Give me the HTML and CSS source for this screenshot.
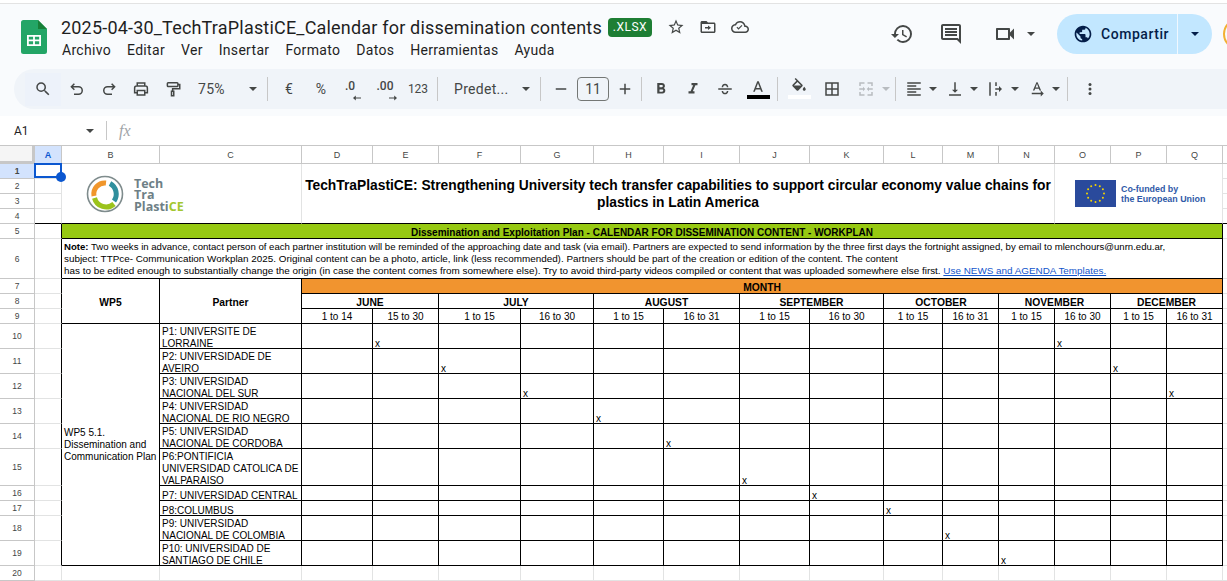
FILE: index.html
```html
<!DOCTYPE html>
<html lang="es">
<head>
    <meta charset="UTF-8">
    <title>2025-04-30_TechTraPlastiCE_Calendar for dissemination contents</title>
    <link rel="stylesheet" href="styles.css">
</head>
<body>
<div class="app">
    <header class="topbar">
        <svg class="sheets-logo" viewBox="0 0 26 34"><path fill="#23a566" d="M2.5 0H17l9 9v22.500a2.500 2.500 0 0 1-2.500 2.500h-21A2.500 2.500 0 0 1 0 31.500v-29A2.500 2.500 0 0 1 2.500 0z"/><path fill="#188038" d="M17 0l9 9h-9z"/><path fill="#fff" d="M6 15h14v11H6zm1.800 1.800v2.800h4.300v-2.800zm6.100 0v2.800h4.300v-2.800zm-6.100 4.500v2.900h4.300v-2.900zm6.100 0v2.900h4.300v-2.900z" fill-rule="evenodd"/></svg>
        <div class="doc">
            <div class="doc-title">
                <h1>2025-04-30_TechTraPlastiCE_Calendar for dissemination contents</h1>
                <span class="badge">.XLSX</span>
                <svg class="ic star" viewBox="0 0 24 24"><path d="M22 9.240l-7.190-.620L12 2 9.190 8.630 2 9.240l5.460 4.730L5.820 21 12 17.270 18.180 21l-1.630-7.030L22 9.240zM12 15.400l-3.760 2.270 1-4.280-3.320-2.880 4.380-.380L12 6.100l1.710 4.040 4.380.380-3.320 2.880 1 4.280L12 15.400z"/></svg>
                <svg class="ic folder" viewBox="0 0 24 24"><path d="M20 6h-8l-2-2H4c-1.100 0-2 .900-2 2v12c0 1.100.900 2 2 2h16c1.100 0 2-.900 2-2V8c0-1.100-.900-2-2-2zm0 12H4V8h16v10zm-8-2v-2H8v-2h4v-2l4 3z"/></svg>
                <svg class="ic cloud" viewBox="0 0 24 24"><path d="M19.350 10.040C18.670 6.590 15.640 4 12 4 9.110 4 6.600 5.640 5.350 8.040 2.340 8.360 0 10.910 0 14c0 3.310 2.690 6 6 6h13c2.760 0 5-2.240 5-5 0-2.640-2.050-4.780-4.650-4.960zM19 18H6c-2.210 0-4-1.790-4-4 0-2.050 1.530-3.760 3.560-3.970l1.070-.110.500-.950C8.080 7.140 9.940 6 12 6c2.620 0 4.880 1.860 5.390 4.430l.300 1.500 1.530.110c1.560.100 2.780 1.410 2.780 2.960 0 1.650-1.350 3-3 3zm-9-2.500l-2.700-2.700 1.100-1.100 1.600 1.600 4.100-4.100 1.100 1.100z"/></svg>
            </div>
            <nav class="menu">
                <span>Archivo</span><span>Editar</span><span>Ver</span><span>Insertar</span><span>Formato</span><span>Datos</span><span>Herramientas</span><span>Ayuda</span>
            </nav>
        </div>
        <div class="actions">
            <svg class="ic-lg history" viewBox="0 0 24 24"><path d="M13 3a9 9 0 0 0-9 9H1l3.890 3.890.070.140L9 12H6c0-3.870 3.130-7 7-7s7 3.130 7 7-3.130 7-7 7c-1.930 0-3.680-.790-4.940-2.060l-1.420 1.420A8.954 8.954 0 0 0 13 21a9 9 0 0 0 0-18zm-1 5v5l4.280 2.540.720-1.210-3.500-2.080V8H12z"/></svg>
            <svg class="ic-lg comment" viewBox="0 0 24 24"><path d="M21.990 4c0-1.100-.890-2-1.990-2H4c-1.100 0-2 .900-2 2v12c0 1.100.900 2 2 2h14l4 4-.010-18zM20 4v13.170L18.830 16H4V4h16zM6 12h12v2H6zm0-3h12v2H6zm0-3h12v2H6z"/></svg>
            <svg class="ic-lg video" viewBox="0 0 24 24"><path d="M15 8v8H5V8h10m1-2H4c-.550 0-1 .450-1 1v10c0 .550.450 1 1 1h12c.550 0 1-.450 1-1v-3.500l4 4v-11l-4 4V7c0-.550-.450-1-1-1z"/></svg>
            <i class="caret video-caret"></i>
        </div>
        <div class="share">
            <div class="share-main">
                <svg class="globe" viewBox="0 0 24 24"><path d="M12 2C6.480 2 2 6.480 2 12s4.480 10 10 10 10-4.480 10-10S17.520 2 12 2zm-1 17.930c-3.950-.490-7-3.850-7-7.930 0-.620.080-1.210.210-1.790L9 15v1c0 1.100.900 2 2 2v1.930zm6.900-2.540c-.260-.810-1-1.390-1.900-1.390h-1v-3c0-.550-.450-1-1-1H8v-2h2c.550 0 1-.450 1-1V7h2c1.100 0 2-.900 2-2v-.410c2.930 1.190 5 4.060 5 7.410 0 2.080-.800 3.970-2.100 5.390z"/></svg>
                <span>Compartir</span>
            </div>
            <div class="share-more"><i class="caret dark"></i></div>
        </div>
        <div class="avatar"></div>
    </header>

    <div class="toolbar-wrap">
    <div class="toolbar">
        <div class="tool search"><svg class="ic" viewBox="0 0 24 24"><path d="M15.500 14h-.790l-.280-.270A6.471 6.471 0 0 0 16 9.500 6.500 6.500 0 1 0 9.500 16c1.610 0 3.090-.590 4.230-1.570l.270.280v.790l5 4.990L20.490 19l-4.990-5zm-6 0C7.010 14 5 11.990 5 9.500S7.010 5 9.500 5 14 7.010 14 9.500 11.990 14 9.500 14z"/></svg></div>
        <div class="tool"><svg class="ic line" viewBox="0 0 24 24"><path d="M8.500 5L4.500 9l4 4M4.500 9H14a4.800 4.800 0 0 1 0 10H8"/></svg></div>
        <div class="tool"><svg class="ic line" viewBox="0 0 24 24"><path d="M15.500 5l4 4-4 4M19.500 9H10a4.800 4.800 0 0 0 0 10h6"/></svg></div>
        <div class="tool"><svg class="ic line" viewBox="0 0 24 24"><path d="M7 8V4h10v4M7 17H3.500v-6.500A2.500 2.500 0 0 1 6 8h12a2.500 2.500 0 0 1 2.500 2.500V17H17M7 14h10v6H7z"/></svg></div>
        <div class="tool"><svg class="ic line" viewBox="0 0 24 24"><path d="M5.500 3.500h12a1 1 0 0 1 1 1v3a1 1 0 0 1-1 1h-12a1 1 0 0 1-1-1v-3a1 1 0 0 1 1-1zM18.500 6H21v5.500h-9.500V15M10 15h3v6h-3z"/></svg></div>
        <div class="select zoom-select"><span>75%</span><i class="caret"></i></div>
        <i class="sep"></i>
        <div class="tool txt euro">€</div>
        <div class="tool txt">%</div>
        <div class="tool dec dec-less"><span>.0</span><svg viewBox="0 0 10 6"><path d="M10 2.400H3.500V0L0 3l3.500 3V3.600H10z"/></svg></div>
        <div class="tool dec dec-more"><span>.00</span><svg viewBox="0 0 10 6"><path d="M0 2.400h6.500V0L10 3 6.500 6V3.600H0z"/></svg></div>
        <div class="tool txt num">123</div>
        <i class="sep"></i>
        <div class="select font-select"><span>Predet...</span><i class="caret"></i></div>
        <i class="sep"></i>
        <div class="tool small"><svg class="ic" viewBox="0 0 24 24"><path d="M5 11h14v2H5z"/></svg></div>
        <div class="size-box">11</div>
        <div class="tool small"><svg class="ic" viewBox="0 0 24 24"><path d="M19 13h-6v6h-2v-6H5v-2h6V5h2v6h6z"/></svg></div>
        <i class="sep plus-sep"></i>
        <div class="tool"><svg class="ic" viewBox="0 0 24 24"><path d="M15.600 10.790c.970-.670 1.650-1.770 1.650-2.790 0-2.260-1.750-4-4-4H7v14h7.040c2.090 0 3.710-1.700 3.710-3.790 0-1.520-.860-2.820-2.150-3.420zM10 6.500h3c.830 0 1.500.670 1.500 1.500s-.670 1.500-1.500 1.500h-3v-3zm3.500 9H10v-3h3.500c.830 0 1.500.670 1.500 1.500s-.670 1.500-1.500 1.500z"/></svg></div>
        <div class="tool"><svg class="ic" viewBox="0 0 24 24"><path d="M10 4v3h2.210l-3.420 8H6v3h8v-3h-2.210l3.420-8H18V4z"/></svg></div>
        <div class="tool"><svg class="ic" viewBox="0 0 24 24"><path d="M3 11h18v2H3zM7.500 9.500C7.800 6.500 9.800 5 12 5s4.200 1.500 4.500 4.500h-2C14.200 8 13.300 7 12 7s-2.200 1-2.500 2.500zM7.500 14.500h2C9.800 16.200 10.700 17 12 17s2.200-.800 2.500-2.500h2C16.200 17.500 14.200 19 12 19s-4.200-1.500-4.500-4.500z"/></svg></div>
        <div class="tool color"><svg class="ic" viewBox="0 0 24 24"><path d="M11 3L5.500 17h2.250l1.120-3h6.250l1.120 3h2.250L13 3h-2zm-1.380 9L12 5.670 14.380 12H9.620z"/></svg><b class="bar black"></b></div>
        <i class="sep color-sep"></i>
        <div class="tool color fill"><svg class="ic" viewBox="0 0 24 24"><path d="M16.560 8.940L7.620 0 6.210 1.410l2.380 2.380-5.150 5.150c-.590.590-.590 1.540 0 2.120l5.500 5.500c.290.290.680.440 1.060.440s.770-.150 1.060-.440l5.500-5.500c.590-.580.590-1.530 0-2.120zM5.210 10L10 5.210 14.790 10H5.210zM19 11.500s-2 2.170-2 3.500c0 1.100.900 2 2 2s2-.900 2-2c0-1.330-2-3.500-2-3.500z"/></svg><b class="bar white"></b></div>
        <div class="tool borders"><svg class="ic" viewBox="0 0 24 24"><path d="M3 3v18h18V3H3zm8 16H5v-6h6v6zm0-8H5V5h6v6zm8 8h-6v-6h6v6zm0-8h-6V5h6v6z"/></svg></div>
        <div class="tool merge"><svg class="ic off" viewBox="0 0 24 24"><path d="M3 3h7v2H5v3H3zM14 3h7v5h-2V5h-5zM3 16h2v3h5v2H3zM19 16h2v5h-7v-2h5zM3 11h5V9l3 3-3 3v-2H3zM21 11h-5V9l-3 3 3 3v-2h5z"/></svg></div>
        <i class="caret off merge-caret"></i>
        <i class="sep merge-sep"></i>
        <div class="tool drop"><svg class="ic" viewBox="0 0 24 24"><path d="M3 3h18v2H3zM3 7h12v2H3zM3 11h18v2H3zM3 15h12v2H3zM3 19h18v2H3z"/></svg><i class="caret"></i></div>
        <div class="tool drop"><svg class="ic" viewBox="0 0 24 24"><path d="M16 13h-3V3h-2v10H8l4 4 4-4zM4 19v2h16v-2H4z"/></svg><i class="caret"></i></div>
        <div class="tool drop"><svg class="ic" viewBox="0 0 24 24"><path d="M3 3h2v18H3zM11 3h2v5h-2zM11 16h2v5h-2zM11 11h5V8l4 4-4 4v-3h-5z"/></svg><i class="caret"></i></div>
        <div class="tool drop"><svg class="ic" viewBox="0 0 24 24"><path d="M12.750 3h-1.500L6.500 14h2.100l.900-2.200h5l.900 2.200h2.100L12.750 3zm-2.620 7L12 4.980 13.870 10h-3.740zM17 17H5v2h12v3l4-4-4-4v3z"/></svg><i class="caret"></i></div>
        <i class="sep rotate-sep"></i>
        <div class="tool more"><svg class="ic" viewBox="0 0 24 24"><circle cx="12" cy="6" r="2"/><circle cx="12" cy="12" r="2"/><circle cx="12" cy="18" r="2"/></svg></div>
    </div>
    </div>

    <div class="formula">
        <div class="name-box"><span>A1</span><i class="caret"></i></div>
        <i class="formula-sep"></i>
        <span class="fx">fx</span>
    </div>

    <div class="sheet">
        <table class="grid">
            <colgroup>
                <col class="c-head"><col class="c-a"><col class="c-b"><col class="c-c">
                <col class="c-d"><col class="c-e"><col class="c-f"><col class="c-g"><col class="c-h"><col class="c-i"><col class="c-j"><col class="c-k"><col class="c-l">
                <col class="c-s"><col class="c-s"><col class="c-s"><col class="c-s"><col class="c-s"><col class="c-r">
            </colgroup>
            <tr class="r-head">
                <th class="corner"></th><th class="picked">A</th><th>B</th><th>C</th><th>D</th><th>E</th><th>F</th><th>G</th><th>H</th><th>I</th><th>J</th><th>K</th><th>L</th><th>M</th><th>N</th><th>O</th><th>P</th><th>Q</th><th></th>
            </tr>
            <tr class="r15">
                <td class="num picked">1</td>
                <td class="cell-a1"><div class="selection"><b></b></div></td>
                <td colspan="2" rowspan="4" class="to-black">
                    <div class="tech-logo">
                        <svg viewBox="0 0 40 40"><circle cx="20" cy="20" r="17.500" fill="none" stroke="#7f8c8d" stroke-width="1.600"/><g fill="none" stroke-width="5"><path stroke="#f0962c" d="M9 22A11 11 0 0 1 21 9"/><path stroke="#2f8f9d" d="M25 9.500A12 12 0 0 1 29 27"/><path stroke="#9bc31c" d="M9.500 24A12 12 0 0 0 29 30"/></g></svg>
                        <div class="tech-name">Tech<br>Tra<br>Plasti<span>CE</span></div>
                    </div>
                </td>
                <td colspan="11" rowspan="4" class="main-title to-black">TechTraPlastiCE: Strengthening University tech transfer capabilities to support circular economy value chains for plastics in Latin America</td>
                <td colspan="3" rowspan="4" class="to-black">
                    <div class="eu-logo">
                        <svg viewBox="0 0 41 27"><rect width="41" height="27" fill="#2a4a9c"/><g fill="#f5d400"><circle cx="20.500" cy="5" r="1"/><circle cx="24.800" cy="6.200" r="1"/><circle cx="27.900" cy="9.200" r="1"/><circle cx="29" cy="13.500" r="1"/><circle cx="27.900" cy="17.800" r="1"/><circle cx="24.800" cy="20.800" r="1"/><circle cx="20.500" cy="22" r="1"/><circle cx="16.200" cy="20.800" r="1"/><circle cx="13.100" cy="17.800" r="1"/><circle cx="12" cy="13.500" r="1"/><circle cx="13.100" cy="9.200" r="1"/><circle cx="16.200" cy="6.200" r="1"/></g></svg>
                        <div class="eu-text">Co-funded by<br>the European Union</div>
                    </div>
                </td>
                <td></td>
            </tr>
            <tr class="r15"><td class="num">2</td><td></td><td></td></tr>
            <tr class="r15"><td class="num">3</td><td></td><td></td></tr>
            <tr class="r15"><td class="num">4</td><td class="to-black"></td><td class="to-black"></td></tr>
            <tr class="r15">
                <td class="num">5</td><td class="edge"></td>
                <td colspan="16" class="k green">Dissemination and Exploitation Plan - CALENDAR FOR DISSEMINATION CONTENT - WORKPLAN</td>
                <td></td>
            </tr>
            <tr class="r40">
                <td class="num">6</td><td class="edge"></td>
                <td colspan="16" class="k note"><strong>Note:</strong> Two weeks in advance, contact person of each partner institution will be reminded of the approaching date and task (via email). Partners are expected to send information by the three first days the fortnight assigned, by email to mlenchours@unrn.edu.ar,<br><span class="note-wide">subject: TTPce- Communication Workplan 2025. Original content can be a photo, article, link (less recommended). Partners should be part of the creation or edition of the content. The content<br>has to be edited enough to substantially change the origin (in case the content comes from somewhere else). Try to avoid third-party videos compiled or content that was uploaded somewhere else first. <a href="#">Use NEWS and AGENDA Templates.</a></span></td>
                <td></td>
            </tr>
            <tr class="r15">
                <td class="num">7</td><td class="edge"></td>
                <td rowspan="3" class="k head">WP5</td>
                <td rowspan="3" class="k head">Partner</td>
                <td colspan="14" class="k head orange">MONTH</td>
                <td></td>
            </tr>
            <tr class="r15">
                <td class="num">8</td><td class="edge"></td>
                <td colspan="2" class="k head">JUNE</td><td colspan="2" class="k head">JULY</td><td colspan="2" class="k head">AUGUST</td><td colspan="2" class="k head">SEPTEMBER</td><td colspan="2" class="k head">OCTOBER</td><td colspan="2" class="k head">NOVEMBER</td><td colspan="2" class="k head">DECEMBER</td>
                <td></td>
            </tr>
            <tr class="r15 ranges">
                <td class="num">9</td><td class="edge"></td>
                <td class="k">1 to 14</td><td class="k">15 to 30</td><td class="k">1 to 15</td><td class="k">16 to 30</td><td class="k">1 to 15</td><td class="k">16 to 31</td><td class="k">1 to 15</td><td class="k">16 to 30</td><td class="k">1 to 15</td><td class="k">16 to 31</td><td class="k">1 to 15</td><td class="k">16 to 30</td><td class="k">1 to 15</td><td class="k">16 to 31</td>
                <td></td>
            </tr>
            <tr class="r25 plan">
                <td class="num">10</td><td class="edge"></td>
                <td rowspan="10" class="k wp">WP5 5.1.<br>Dissemination and<br>Communication Plan</td>
                <td class="k"><div class="t">P1: UNIVERSITE DE<br>LORRAINE</div></td>
                <td class="k"></td><td class="k"><div class="t">x</div></td><td class="k"></td><td class="k"></td><td class="k"></td><td class="k"></td><td class="k"></td><td class="k"></td><td class="k"></td><td class="k"></td><td class="k"></td><td class="k"><div class="t">x</div></td><td class="k"></td><td class="k"></td>
                <td></td>
            </tr>
            <tr class="r25 plan">
                <td class="num">11</td><td class="edge"></td>
                <td class="k"><div class="t">P2: UNIVERSIDADE DE<br>AVEIRO</div></td>
                <td class="k"></td><td class="k"></td><td class="k"><div class="t">x</div></td><td class="k"></td><td class="k"></td><td class="k"></td><td class="k"></td><td class="k"></td><td class="k"></td><td class="k"></td><td class="k"></td><td class="k"></td><td class="k"><div class="t">x</div></td><td class="k"></td>
                <td></td>
            </tr>
            <tr class="r25 plan">
                <td class="num">12</td><td class="edge"></td>
                <td class="k"><div class="t">P3: UNIVERSIDAD<br>NACIONAL DEL SUR</div></td>
                <td class="k"></td><td class="k"></td><td class="k"></td><td class="k"><div class="t">x</div></td><td class="k"></td><td class="k"></td><td class="k"></td><td class="k"></td><td class="k"></td><td class="k"></td><td class="k"></td><td class="k"></td><td class="k"></td><td class="k"><div class="t">x</div></td>
                <td></td>
            </tr>
            <tr class="r25 plan">
                <td class="num">13</td><td class="edge"></td>
                <td class="k"><div class="t">P4: UNIVERSIDAD<br>NACIONAL DE RIO NEGRO</div></td>
                <td class="k"></td><td class="k"></td><td class="k"></td><td class="k"></td><td class="k"><div class="t">x</div></td><td class="k"></td><td class="k"></td><td class="k"></td><td class="k"></td><td class="k"></td><td class="k"></td><td class="k"></td><td class="k"></td><td class="k"></td>
                <td></td>
            </tr>
            <tr class="r25 plan">
                <td class="num">14</td><td class="edge"></td>
                <td class="k"><div class="t">P5: UNIVERSIDAD<br>NACIONAL DE CORDOBA</div></td>
                <td class="k"></td><td class="k"></td><td class="k"></td><td class="k"></td><td class="k"></td><td class="k"><div class="t">x</div></td><td class="k"></td><td class="k"></td><td class="k"></td><td class="k"></td><td class="k"></td><td class="k"></td><td class="k"></td><td class="k"></td>
                <td></td>
            </tr>
            <tr class="r37 plan">
                <td class="num">15</td><td class="edge"></td>
                <td class="k"><div class="t">P6:PONTIFICIA<br>UNIVERSIDAD CATOLICA DE<br>VALPARAISO</div></td>
                <td class="k"></td><td class="k"></td><td class="k"></td><td class="k"></td><td class="k"></td><td class="k"></td><td class="k"><div class="t">x</div></td><td class="k"></td><td class="k"></td><td class="k"></td><td class="k"></td><td class="k"></td><td class="k"></td><td class="k"></td>
                <td></td>
            </tr>
            <tr class="r15 plan">
                <td class="num">16</td><td class="edge"></td>
                <td class="k"><div class="t">P7: UNIVERSIDAD CENTRAL</div></td>
                <td class="k"></td><td class="k"></td><td class="k"></td><td class="k"></td><td class="k"></td><td class="k"></td><td class="k"></td><td class="k"><div class="t">x</div></td><td class="k"></td><td class="k"></td><td class="k"></td><td class="k"></td><td class="k"></td><td class="k"></td>
                <td></td>
            </tr>
            <tr class="r15 plan">
                <td class="num">17</td><td class="edge"></td>
                <td class="k"><div class="t">P8:COLUMBUS</div></td>
                <td class="k"></td><td class="k"></td><td class="k"></td><td class="k"></td><td class="k"></td><td class="k"></td><td class="k"></td><td class="k"></td><td class="k"><div class="t">x</div></td><td class="k"></td><td class="k"></td><td class="k"></td><td class="k"></td><td class="k"></td>
                <td></td>
            </tr>
            <tr class="r25 plan">
                <td class="num">18</td><td class="edge"></td>
                <td class="k"><div class="t">P9: UNIVERSIDAD<br>NACIONAL DE COLOMBIA</div></td>
                <td class="k"></td><td class="k"></td><td class="k"></td><td class="k"></td><td class="k"></td><td class="k"></td><td class="k"></td><td class="k"></td><td class="k"></td><td class="k"><div class="t">x</div></td><td class="k"></td><td class="k"></td><td class="k"></td><td class="k"></td>
                <td></td>
            </tr>
            <tr class="r25 plan">
                <td class="num">19</td><td class="edge"></td>
                <td class="k"><div class="t">P10: UNIVERSIDAD DE<br>SANTIAGO DE CHILE</div></td>
                <td class="k"></td><td class="k"></td><td class="k"></td><td class="k"></td><td class="k"></td><td class="k"></td><td class="k"></td><td class="k"></td><td class="k"></td><td class="k"></td><td class="k"><div class="t">x</div></td><td class="k"></td><td class="k"></td><td class="k"></td>
                <td></td>
            </tr>
            <tr class="r15">
                <td class="num">20</td><td></td><td></td><td></td><td></td><td></td><td></td><td></td><td></td><td></td><td></td><td></td><td></td><td></td><td></td><td></td><td></td><td></td><td></td>
            </tr>
        </table>
    </div>
</div>
</body>
</html>
```

FILE: styles.css
```css
* {
    box-sizing: border-box;
}
html, body {
    margin: 0;
    height: 100%;
    overflow: hidden;
    background: white;
}
.app {
    width: 1227px;
    height: 581px;
    display: flex;
    flex-direction: column;
    overflow: hidden;
    font-family: Roboto, "Open Sans", sans-serif;
    color: #1f1f1f;
}

/* top bar */
.topbar {
    height: 66px;
    margin-top: 3px;
    padding-left: 21px;
    display: flex;
    align-items: flex-start;
    background: #f9fbfd;
    border-top: 1px solid #e3e3e3;
    flex: none;
}
.sheets-logo {
    width: 26px;
    height: 34px;
    margin-top: 16px;
    flex: none;
}
.doc {
    margin-left: 14px;
    width: 720px;
    flex: none;
}
.doc-title {
    display: flex;
    align-items: center;
    height: 24px;
    margin-top: 11px;
}
.doc-title h1 {
    margin: 0;
    font-size: 18px;
    font-weight: 400;
    letter-spacing: 0.19px;
    white-space: nowrap;
    color: #1f1f1f;
    width: 547px;
}
.badge {
    width: 44px;
    height: 19px;
    background: #1e7e34;
    color: white;
    font-size: 12px;
    line-height: 19px;
    letter-spacing: 0.5px;
    text-align: center;
    border-radius: 4px;
    flex: none;
}
.ic {
    width: 18px;
    height: 18px;
    fill: #444746;
    flex: none;
}
.ic.line {
    fill: none;
    stroke: #444746;
    stroke-width: 2;
}
.ic.off {
    fill: #b8bcc0;
}
.star {
    margin-left: 15px;
}
.folder, .cloud {
    margin-left: 14px;
}
.menu {
    display: flex;
    gap: 16px;
    margin-top: 1px;
    margin-left: 1px;
    font-size: 14px;
    line-height: 20px;
    letter-spacing: 0.31px;
    color: #1f1f1f;
}
.actions {
    display: flex;
    align-items: center;
    margin-top: 14px;
    height: 32px;
    margin-left: 109px;
    flex: none;
}
.ic-lg {
    width: 24px;
    height: 24px;
    fill: #444746;
    flex: none;
}
.comment {
    margin-left: 25px;
}
.video {
    margin-left: 30px;
}
.video-caret {
    margin-left: 10px;
}
.caret {
    display: inline-block;
    width: 0;
    height: 0;
    border-left: 4.5px solid transparent;
    border-right: 4.5px solid transparent;
    border-top: 4.5px solid #444746;
    flex: none;
}
.caret.dark {
    border-top-color: #041e49;
}
.caret.off {
    border-top-color: #b8bcc0;
}
.share {
    display: flex;
    height: 40px;
    width: 155px;
    margin-top: 10px;
    margin-left: 22px;
    flex: none;
    background: #c2e7ff;
    border-radius: 20px;
    color: #041e49;
}
.share-main {
    width: 121px;
    display: flex;
    align-items: center;
    padding-left: 16px;
    border-right: 1px solid #f0f8ff;
    font-size: 14px;
    letter-spacing: 0.55px;
    font-weight: 500;
}
.globe {
    width: 20px;
    height: 20px;
    fill: #041e49;
    margin-right: 8px;
}
.share-more {
    flex: 1;
    display: flex;
    align-items: center;
    justify-content: center;
}
.avatar {
    width: 32px;
    height: 32px;
    margin-top: 14px;
    margin-left: 11px;
    border: 2px solid #f2b134;
    border-radius: 50%;
    flex: none;
}

/* toolbar */
.toolbar-wrap {
    height: 47px;
    flex: none;
    background: #f9fbfd;
    padding-left: 14px;
}
.toolbar {
    height: 40px;
    display: flex;
    align-items: center;
    background: #f0f4f9;
    border-radius: 20px 0 0 20px;
    color: #444746;
}
.tool {
    width: 32px;
    height: 32px;
    display: flex;
    align-items: center;
    justify-content: center;
    flex: none;
    position: relative;
    font-size: 14px;
}
.search {
    width: 36px;
    height: 33px;
    margin-left: 11px;
    background: #edf2fa;
}
.select {
    display: flex;
    align-items: center;
    justify-content: space-between;
    font-size: 14px;
    letter-spacing: 0.3px;
    flex: none;
}
.zoom-select {
    width: 59px;
    margin-left: 9px;
}
.sep {
    width: 1px;
    height: 24px;
    background: #c7c7c7;
    flex: none;
    margin: 0 3px;
}
.zoom-select + .sep {
    margin-left: 10px;
    margin-right: 5px;
}
.txt.num {
    font-size: 12px;
    margin-left: 1px;
}
.dec {
    font-size: 12px;
    font-weight: 500;
}
.dec span {
    position: relative;
    top: -3px;
}
.dec-less span {
    left: -3px;
}
.dec svg {
    position: absolute;
    width: 8px;
    height: 6px;
    top: 22px;
    fill: #444746;
}
.dec-less svg {
    left: 16px;
}
.dec-more svg {
    left: 20px;
}
.font-select {
    width: 76px;
    margin-left: 13px;
}
.font-select + .sep {
    margin-left: 10px;
    margin-right: 8px;
}
.small {
    width: 24px;
}
.size-box {
    width: 32px;
    height: 24px;
    margin: 0 4px;
    border: 1px solid #747775;
    border-radius: 4px;
    font-size: 14px;
    line-height: 22px;
    text-align: center;
    flex: none;
}
.plus-sep {
    margin: 0 3px 0 4px;
}
.color {
    display: block;
}
.color .ic {
    position: absolute;
    left: 8px;
    top: 6px;
}
.color .bar {
    position: absolute;
    left: 6px;
    top: 22px;
    width: 23px;
    height: 4px;
}
.color.fill .ic {
    left: 9px;
    top: 5px;
}
.color.fill .bar {
    left: 7px;
}
.bar.black {
    background: black;
}
.bar.white {
    background: white;
}
.color-sep {
    margin: 0 3px 0 4px;
}
.borders {
    margin-left: 3px;
}
.merge {
    margin-left: 1px;
    width: 33px;
}
.merge-sep {
    margin: 0 9px 0 5px;
}
.drop {
    width: 41px;
    justify-content: flex-start;
}
.drop .caret {
    margin-left: 6px;
}
.rotate-sep {
    margin: 0 6px 0 -2px;
}

/* formula bar */
.formula {
    height: 29px;
    flex: none;
    display: flex;
    align-items: center;
    background: white;
}
.name-box {
    width: 94px;
    padding-left: 14px;
    display: flex;
    align-items: center;
    justify-content: space-between;
    font-size: 12px;
}
.formula-sep {
    width: 1px;
    height: 19px;
    margin-left: 12px;
    background: #c7c7c7;
}
.fx {
    margin-left: 12px;
    font-family: "Liberation Serif", serif;
    font-style: italic;
    font-size: 16px;
    color: #a0a4a8;
}

/* sheet */
.sheet {
    flex: 1;
    overflow: hidden;
    border-top: 1px solid #c7c7c7;
    background: white;
}
.grid {
    border-collapse: separate;
    border-spacing: 0;
    table-layout: fixed;
    width: 1323px;
    font-family: "Liberation Sans", Arial, sans-serif;
    font-size: 10px;
    line-height: 12px;
    color: black;
}
.c-head { width: 35px; }
.c-a { width: 27px; }
.c-b { width: 98px; }
.c-c { width: 142px; }
.c-d { width: 71px; }
.c-e { width: 66px; }
.c-f { width: 82px; }
.c-g { width: 73px; }
.c-h { width: 70px; }
.c-i { width: 76px; }
.c-j { width: 70px; }
.c-k { width: 74px; }
.c-l { width: 59px; }
.c-s { width: 56px; }
.c-r { width: 100px; }

.grid th, .grid td {
    padding: 0 2px;
    overflow: hidden;
    white-space: nowrap;
    border-right: 1px solid #e2e3e3;
    border-bottom: 1px solid #e2e3e3;
}
.r-head {
    height: 18px;
}
.grid th {
    font-weight: 400;
    font-size: 9px;
    color: #444746;
    background: white;
    border-right-color: #c7c7c7;
    border-bottom-color: #c7c7c7;
    text-align: center;
}
.grid th.corner {
    background: #f5f5f5;
    box-shadow: inset -2px -2px 0 #c7c7c7;
}
.grid th.picked, .grid td.picked {
    background: #d3e3fd;
    color: #0b57d0;
    font-weight: 700;
}
.grid td.num {
    padding: 0;
    font-size: 8.500px;
    text-align: center;
    vertical-align: middle;
    color: #444746;
    border-right-color: #c7c7c7;
    border-bottom-color: #c7c7c7;
}
.r15 { height: 15px; }
.r25 { height: 25px; }
.r37 { height: 37px; }
.r40 { height: 40px; }

.grid td.k {
    border-right-color: black;
    border-bottom-color: black;
}
.grid td.edge {
    border-right-color: black;
}
.grid td.to-black {
    border-bottom-color: black;
}
.cell-a1 {
    position: relative;
}
.grid td.cell-a1 {
    overflow: visible;
}
.selection {
    position: absolute;
    left: -1px;
    top: -1px;
    right: -1px;
    bottom: 0;
    border: 2px solid #0b57d0;
}
.selection b {
    position: absolute;
    right: -6px;
    bottom: -6px;
    width: 10px;
    height: 10px;
    background: #0b57d0;
    border-radius: 50%;
    z-index: 2;
}
.tech-logo {
    display: flex;
    align-items: center;
    padding-left: 21px;
}
.tech-logo svg {
    width: 40px;
    height: 40px;
    flex: none;
}
.tech-name {
    margin-left: 9px;
    margin-top: 3px;
    font-family: "Open Sans", sans-serif;
    font-weight: 700;
    font-size: 12.500px;
    line-height: 11.500px;
    color: #6e7f86;
}
.tech-name span {
    color: #a3c72e;
}
.grid td.main-title {
    font-size: 13.800px;
    font-weight: 700;
    line-height: 17px;
    text-align: center;
    white-space: normal;
    padding: 0;
}
.eu-logo {
    display: flex;
    align-items: center;
    padding-left: 18px;
}
.eu-logo svg {
    width: 41px;
    height: 27px;
    flex: none;
}
.eu-text {
    margin-left: 5px;
    font-size: 8.900px;
    font-weight: 700;
    line-height: 10px;
    color: #2f5aa8;
}
.grid td.green {
    background: #97c912;
    font-weight: 700;
    text-align: center;
    line-height: 11px;
    padding-top: 3px;
}
.note {
    font-size: 9.600px;
}
.note-wide {
    font-size: 9.880px;
}
.note a {
    color: #1155cc;
}
.grid td.head {
    font-weight: 700;
    text-align: center;
    font-size: 10.300px;
    line-height: 11px;
    padding-top: 3px;
}
.orange {
    background: #f1942f;
}
.ranges td.k {
    text-align: center;
    padding-top: 2px;
}
.plan td {
    vertical-align: bottom;
}
.plan .t {
    margin-bottom: -1.500px;
}
.grid td.wp {
    vertical-align: middle;
}
```
